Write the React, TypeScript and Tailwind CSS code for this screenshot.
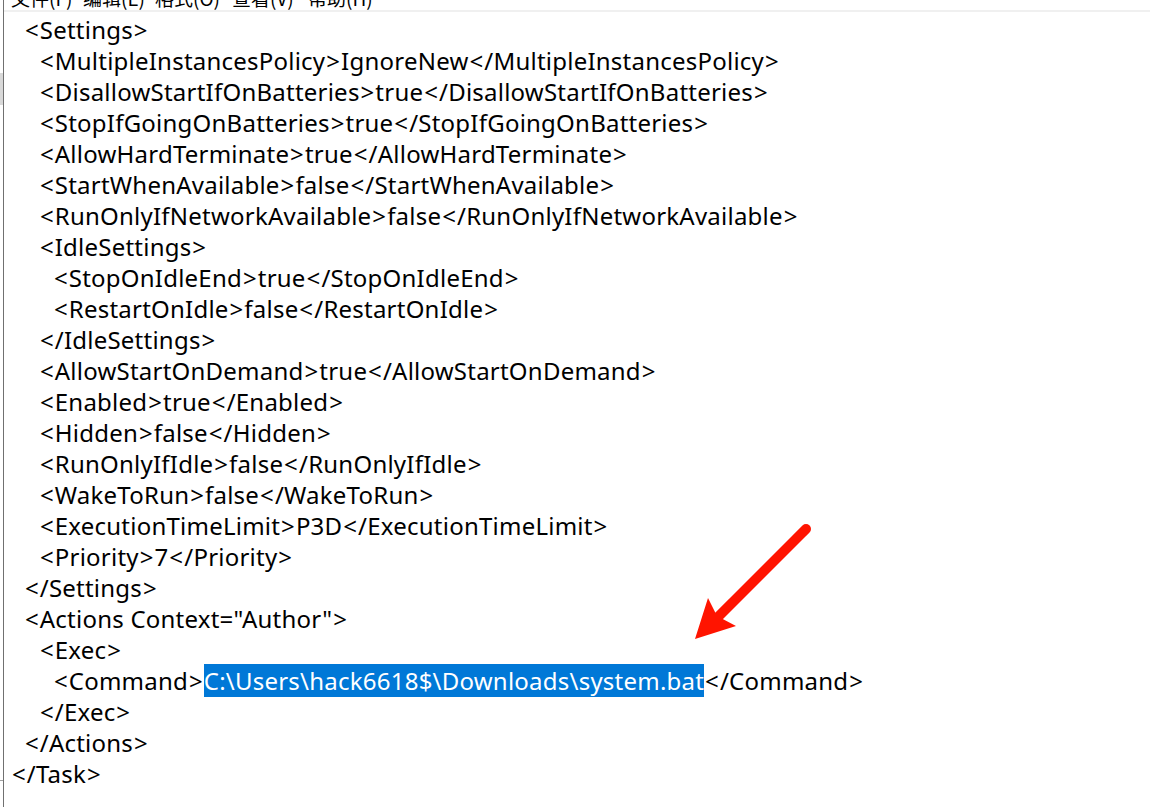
import React from "react";

type Line = { level: number; text: string };

const LINES: Line[] = [
  { level: 1, text: "<Settings>" },
  { level: 2, text: "<MultipleInstancesPolicy>IgnoreNew</MultipleInstancesPolicy>" },
  { level: 2, text: "<DisallowStartIfOnBatteries>true</DisallowStartIfOnBatteries>" },
  { level: 2, text: "<StopIfGoingOnBatteries>true</StopIfGoingOnBatteries>" },
  { level: 2, text: "<AllowHardTerminate>true</AllowHardTerminate>" },
  { level: 2, text: "<StartWhenAvailable>false</StartWhenAvailable>" },
  { level: 2, text: "<RunOnlyIfNetworkAvailable>false</RunOnlyIfNetworkAvailable>" },
  { level: 2, text: "<IdleSettings>" },
  { level: 3, text: "<StopOnIdleEnd>true</StopOnIdleEnd>" },
  { level: 3, text: "<RestartOnIdle>false</RestartOnIdle>" },
  { level: 2, text: "</IdleSettings>" },
  { level: 2, text: "<AllowStartOnDemand>true</AllowStartOnDemand>" },
  { level: 2, text: "<Enabled>true</Enabled>" },
  { level: 2, text: "<Hidden>false</Hidden>" },
  { level: 2, text: "<RunOnlyIfIdle>false</RunOnlyIfIdle>" },
  { level: 2, text: "<WakeToRun>false</WakeToRun>" },
  { level: 2, text: "<ExecutionTimeLimit>P3D</ExecutionTimeLimit>" },
  { level: 2, text: "<Priority>7</Priority>" },
  { level: 1, text: "</Settings>" },
  { level: 1, text: '<Actions Context="Author">' },
  { level: 2, text: "<Exec>" },
  { level: 3, text: "__COMMAND__" },
  { level: 2, text: "</Exec>" },
  { level: 1, text: "</Actions>" },
  { level: 0, text: "</Task>" },
];

const INDENT: Record<number, string> = {
  0: "pl-[0px]",
  1: "pl-[13px]",
  2: "pl-[28px]",
  3: "pl-[42px]",
};

const MENU = [
  { label: "文件(F)", w: "w-[72px]" },
  { label: "编辑(E)", w: "w-[72px]" },
  { label: "格式(O)", w: "w-[77px]" },
  { label: "查看(V)", w: "w-[76px]" },
  { label: "帮助(H)", w: "w-[72px]" },
];

// the editor font draws its angle brackets wider than Noto Sans
const renderXml = (text: string) =>
  text.split(/([<>])/).map((part, i) =>
    part === "<" || part === ">" ? (
      <span key={i} className="px-[0.9px]">
        {part}
      </span>
    ) : (
      <React.Fragment key={i}>{part}</React.Fragment>
    )
  );

const Arrow = () => (
  <svg
    className="absolute left-0 top-0 pointer-events-none"
    width="1150"
    height="807"
    viewBox="0 0 1150 807"
  >
    <line
      x1="806"
      y1="529"
      x2="716"
      y2="619"
      stroke="#ff1400"
      strokeWidth="10"
      strokeLinecap="round"
    />
    <polygon points="695,639 708,598 717,616 736,626" fill="#ff1400" />
  </svg>
);

export default function App() {
  return (
    <div className="relative w-[1150px] h-[807px] overflow-hidden bg-white flex font-['Noto_Sans','Noto_Sans_CJK_SC',sans-serif] text-black">
      {/* window edge on the left */}
      <div className="w-[3px] flex flex-col">
        <div className="h-[73px]" />
        <div className="h-[32px] bg-[#d9d9d9]" />
        <div className="h-[675px]" />
        <div className="h-[1px] bg-[#a0a0a0]" />
      </div>
      <div className="w-[1px] bg-[#707070]" />

      <div className="flex-1 flex flex-col">
        {/* menu bar, cut off at the top */}
        <div className="h-[10px] overflow-hidden">
          <div className="-mt-[12px] flex pl-[7px] text-[19px] leading-[20px] font-['Noto_Sans_CJK_SC',sans-serif]">
            {MENU.map((m) => (
              <span key={m.label} className={`${m.w} whitespace-nowrap`}>
                {m.label}
              </span>
            ))}
          </div>
        </div>
        <div className="h-[2px] bg-[#f0f0f0]" />

        <div className="pt-[2px] pl-[7px] text-[24px] leading-[31px] tracking-[0.23px] whitespace-pre">
          {LINES.map((line, i) => (
            <div key={i} className={`h-[31px] ${INDENT[line.level]}`}>
              {line.text === "__COMMAND__" ? (
                <>
                  {renderXml("<Command>")}
                  <span className="bg-[#0078d7] text-white">
                    {"C:\\Users\\hack6618$\\Downloads\\system.bat"}
                  </span>
                  {renderXml("</Command>")}
                </>
              ) : (
                renderXml(line.text)
              )}
            </div>
          ))}
        </div>
      </div>

      <Arrow />
    </div>
  );
}
